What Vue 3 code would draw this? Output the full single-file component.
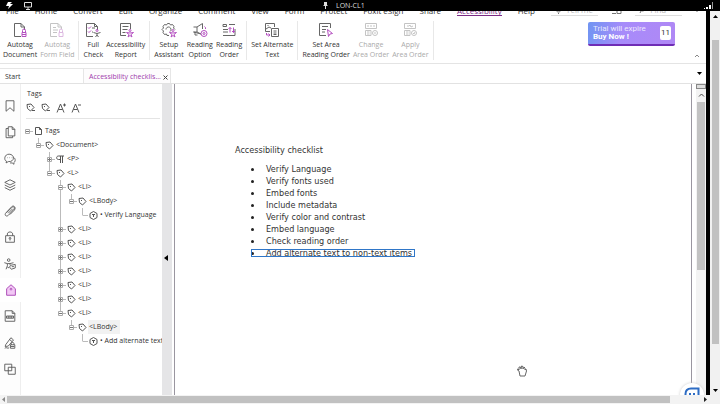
<script setup>
const menus = ['File', 'Home', 'Convert', 'Edit', 'Organize', 'Comment', 'View', 'Form', 'Protect', 'Foxit eSign', 'Share', 'Accessibility', 'Help']

const ribbon = [
  [
    { top: 'Autotag', bottom: 'Document', ink: 'M9 14.500H2.500V1.500H9L12.500 5V8M9 1.500V5H12.500', accent: 'M10.500 10.500V8.500a1.500 1.500 0 0 1 3 0V10.500M10 10.500H14V14.500H10ZM10 12.500H14' },
    { top: 'Autotag', bottom: 'Form Field', off: true, ink: 'M8 14.500H1.500V1.500H9L12.500 5V7M9 1.500V5H12.500M4 5.500H7M4 8H9M4 10.500H8', accent: 'M10.500 10.500V8.500a1.500 1.500 0 0 1 3 0V10.500M10 10.500H14V14.500H10Z' },
  ],
  [
    { top: 'Full', bottom: 'Check', ink: 'M8 14.500H1.500V1.500H9.500L12.500 4.500V8M9.500 1.500V4.500H12.500M7 6H10M7 10H8M8.500 10.500L12 11.500L15.500 10.500M12 11.500V13L10.500 15M12 13L13.500 15', accent: 'M3 5.500L4 6.500L6 4.500M3 9.500L4 10.500L6 8.500M11 8.500a1 1 0 1 0 2 0a1 1 0 1 0 -2 0' },
    { top: 'Accessibility', bottom: 'Report', ink: 'M8 13.500H2.500V1.500H12.500V7M4.500 4.500H10.500M4.500 7.500H9.500M4.500 10.500H7.500', accent: 'M8.500 10.500L12 11L15.500 10.500L13 12.500L14 15L12 13.500L10 15L11 12.500ZM11 8.500a1 1 0 1 0 2 0a1 1 0 1 0 -2 0' },
  ],
  [
    { top: 'Setup', bottom: 'Assistant', ink: 'M8 13.500H6L5.500 12L3.500 12.500L2 10.500L2.500 9L1 7.500L2.500 6L2 4.500L3.500 2.500L5.500 3L6.500 1.500H8.500L9.500 3L11.500 2.500L13 4.500L12.500 6L14 7.500M5 7.500a2.500 2.500 0 1 1 4 2', accent: 'M8.500 10.500L12 11L15.500 10.500L13 12.500L14 15L12 13.500L10 15L11 12.500ZM11 8.500a1 1 0 1 0 2 0a1 1 0 1 0 -2 0' },
    { top: 'Reading', bottom: 'Option', ink: 'M1.500 5H5L10.500 1.500V7M9 12L5 10H1.500ZM5 5V10M3 10V13H5.500', accent: 'M9 11.500a3 3 0 1 0 6 0a3 3 0 1 0 -6 0M11 11.500a1 1 0 1 0 2 0a1 1 0 1 0 -2 0M12.500 4.500Q14 5.500 13.500 7' },
    { top: 'Reading', bottom: 'Order', ink: 'M8 2.500H14M2 2.500H5.500V4.500H2ZM2 7.500H7M2 10H7M2 13.500H14V7', accent: 'M9 10.500V5.500L7.500 7M9 5.500L10.500 7M12.500 5.500V10.500L11 9M12.500 10.500L14 9' },
  ],
  [
    { top: 'Set Alternate', bottom: 'Text', ink: 'M6 9.500H1.500V1.500H10.500V5M2 7L5 5L7 6M3.500 3.500H4.500M7.500 6.500H14.500V14.500H7.500ZM9.500 9H12.500M9.500 11H12.500M9.500 12.500H12.500', accent: 'M2.500 11V13H5.500M4.500 11.500L6 13L4.500 14.500' },
  ],
  [
    { top: 'Set Area', bottom: 'Reading Order', ink: 'M8 13.500H1.500V1.500H12.500V6M4 4.500H10M4 7.500H8M4 10H7', accent: 'M9.500 7.500L14.500 11.500L12 12L10.500 14.500Z' },
    { top: 'Change', bottom: 'Area Order', off: true, ink: 'M2.500 1.500H13.500V6.500H2.500ZM5 3V5M8 3V5M11 3V5M2.500 8.500H8V13.500H2.500ZM4 10H6.500M4 12H6.500M9.500 11a2.500 2.500 0 1 0 5 0a2.500 2.500 0 1 0 -5 0M11 11H13', accent: '' },
    { top: 'Apply', bottom: 'Area Order', off: true, ink: 'M2.500 1.500H13.500V6.500H2.500ZM5 4H7L8 3L9 5L11 4M2.500 8.500H8V13.500H2.500ZM4 10H6.500M4 12H6.500M9.500 11a2.500 2.500 0 1 0 5 0a2.500 2.500 0 1 0 -5 0M11 11L12 12L13 10', accent: '' },
  ],
]

const rail = [
  { name: 'Bookmarks', d: 'M3.500 2H12.500V14L8 10L3.500 14Z' },
  { name: 'Pages', d: 'M6 2H10.500L13.500 5V12.500H6ZM10.500 2V5H13.500M6 4H3.500V14.500H11V12.500' },
  { name: 'Comments', d: 'M7 2.500C1 2.500 1 10 4 10.500L3.500 12.500L6 11C14 11.500 13.500 2.500 7 2.500ZM12 6C15 8 14 11 12.500 12V14L10.500 12.500H8M5 6.500H5.500M7.500 6.500H8M10 6.500H10.500' },
  { name: 'Layers', d: 'M8 2L14 5L8 8L2 5ZM2 8L8 11L14 8M2 11L8 14L14 11' },
  { name: 'Attachments', d: 'M4 10L10 4C12 2 14 4 12.500 6L6 13C3.500 15 1.500 12.500 3 10.500L9.500 3.500C12 0.500 15.500 4 13 7L8 12M6 10.500L11 5.500' },
  { name: 'Security', d: 'M3 6.500H13V14H3ZM5 6.500V4.500C5 1.500 11 1.500 11 4.500V6.500M8 10.500V12M7 9.500a1 1 0 1 0 2 0a1 1 0 1 0 -2 0' },
  { name: 'Accessibility', d: 'M5 3.500a1.500 1.500 0 1 0 3 0a1.500 1.500 0 1 0 -3 0M1.500 6.500L5 7.500V10L3.500 14M5 7.500H8L12 6.500M8 7.500V9M5 11.500L7 12.500M8.500 9.500L14 8.500V12.500L9.500 14L7.500 11.500ZM10 11H12.500' },
  { name: 'Tags', active: true, d: 'M3 6.500L8 2L13 6.500V14H3ZM7 7a1 1 0 1 0 2 0a1 1 0 1 0 -2 0' },
  { name: 'Fields', d: 'M2.500 2H10.500L13.500 5V14H2.500ZM10.500 2V5H13.500M4 8H12V10.500H4ZM6 8V10.500M8 8V10.500M10 8V10.500' },
  { name: 'Signatures', d: 'M3 10L9 2L12 4.500L6 11.500L2.500 12ZM7.500 4L10.500 6.500M2 14C4 12 5 15 7 13.500M9.500 10V8.500C9.500 7 12.500 7 12.500 8.500V10M8.500 10H13.500V14H8.500ZM9 12H13' },
  { name: 'Compare', d: 'M2 2.500H10V10H2ZM6 6H14V14H6Z' },
]

const li = { level: 3, label: '<LI>', icon: 'tag', box: 'plus', more: true }
const tree = [
  { level: 0, label: 'Tags', icon: 'page', box: 'minus' },
  { level: 1, label: '<Document>', icon: 'tag', box: 'minus' },
  { level: 2, label: '<P>', icon: 'para', box: 'plus', more: true },
  { level: 2, label: '<L>', icon: 'tag', box: 'minus' },
  { level: 3, label: '<LI>', icon: 'tag', box: 'minus', more: true },
  { level: 4, label: '<LBody>', icon: 'tag', box: 'minus', pass: true },
  { level: 5, label: '• Verify Language', icon: 'cube', pass: true },
  li, li, li, li, li, li,
  { level: 3, label: '<LI>', icon: 'tag', box: 'minus' },
  { level: 4, label: '<LBody>', icon: 'tag', box: 'minus', selected: true },
  { level: 5, label: '• Add alternate text', icon: 'cube' },
]
const glyphs = {
  page: 'M1.500 0.500H5.500L7.500 2.500V7.500H1.500ZM5.500 0.500V2.500H7.500',
  tag: 'M1 1.500L5 1L8 4.500L4.500 8L1.500 5.500ZM3 3.500H4',
  para: 'M8 1H2.500C0 1 0 4.500 2.500 4.500H4M4.500 1V8M6.500 1V8',
  cube: 'M4.500 0.500L8 2.500V6.500L4.500 8.500L1 6.500V2.500ZM3 3.500H6M4.500 4V6',
}

const items = ['Verify Language', 'Verify fonts used', 'Embed fonts', 'Include metadata', 'Verify color and contrast', 'Embed language', 'Check reading order', 'Add alternate text to non-text items']
</script>

<template>
  <div class="screen">
    <header class="session">
      <div class="session-left">
        <svg width="12" height="9" viewBox="0 0 12 9"><path d="M4 1H8L6 3H9L4 8L5 5H2Z" fill="#fff" /></svg>
        <svg width="10" height="9" viewBox="0 0 10 9"><path d="M1.500 1.500H8.500V6H1.500ZM5 6V8M3 8.500H7" fill="none" stroke="#ddd" /></svg>
      </div>
      <div class="session-name">
        <svg width="5" height="7" viewBox="0 0 5 7"><path d="M1 0H4V3L5 4H3V7H2V4H0L1 3Z" fill="#ddd" /></svg>
        <span>LON-CL1</span>
      </div>
      <svg class="signal" width="10" height="8" viewBox="0 0 10 8"><path d="M0 6H1V7H0ZM2 5H4V7H2ZM5 3H7V7H5Z" fill="#fff" /><path d="M8 0H9V7H8Z" fill="#999" /></svg>
    </header>

    <div class="viewport">
      <div class="remote">
        <div class="window">
          <nav class="menu">
            <button v-for="m in menus" :key="m" :class="{ current: m === 'Accessibility' }">{{ m }}</button>
            <div class="menu-tools">
              <label class="tell"><svg width="7" height="7" viewBox="0 0 7 7"><path d="M1 0C1 3 2 3 2.500 4H4.500C5 3 6 3 6 0M3 5.500H4" /></svg><input aria-label="Tell me" placeholder="Tell me" /></label>
              <svg class="people" width="10" height="7" viewBox="0 0 10 7"><path d="M0 4.500H4M5 4.500V1H9V4.500Z" /></svg>
              <label class="tell"><svg width="7" height="7" viewBox="0 0 7 7"><path d="M1 0C1 4 6 4 6 0M2 3L1 5" /></svg><input aria-label="Find" placeholder="Find" /></label>
              <svg width="2" height="7" viewBox="0 0 2 7"><path d="M1 1V3" /></svg>
            </div>
          </nav>

          <div class="ribbon">
            <div v-for="(group, g) in ribbon" :key="g" class="group">
              <button v-for="b in group" :key="b.top + b.bottom" class="command" :disabled="b.off">
                <svg width="16" height="16" viewBox="0 0 16 16"><path :d="b.ink" /><path class="accent" :d="b.accent" /></svg>
                <span>{{ b.top }}</span>
                <span>{{ b.bottom }}</span>
              </button>
            </div>
            <div class="ribbon-end">
              <a class="trial" href="#">
                <span class="trial-text"><span>Trial will expire</span><b>Buy Now !</b></span>
                <span class="days">11</span>
              </a>
              <button class="fold" aria-label="Collapse ribbon"><svg width="6" height="4" viewBox="0 0 6 4"><path d="M1 3L3 1L5 3" /></svg></button>
            </div>
          </div>

          <div class="tabs">
            <button class="tab">Start</button>
            <div class="tab open">
              <button class="tab-name">Accessibility checklis...</button>
              <button class="close" aria-label="Close tab"><svg width="5" height="5" viewBox="0 0 5 5"><path d="M0.500 0.500L4.500 4.500M4.500 0.500L0.500 4.500" /></svg></button>
            </div>
            <button class="tab-list" aria-label="List tabs"><svg width="5" height="3" viewBox="0 0 5 3"><path d="M0 0H5L2.500 3Z" /></svg></button>
          </div>

          <main class="work">
            <nav class="rail">
              <button v-for="r in rail" :key="r.name" :aria-label="r.name" :class="{ active: r.active }">
                <svg width="14" height="14" viewBox="0 0 16 16"><path :d="r.d" /></svg>
              </button>
            </nav>

            <section class="panel">
              <h2>Tags</h2>
              <div class="tools">
                <button v-for="n in 2" :key="n" :aria-label="n === 1 ? 'Previous tag' : 'Next tag'">
                  <svg width="11" height="10" viewBox="0 0 11 10"><path d="M1 1.500L5 1L8 4.500L4.500 8L1.500 5.500ZM3 3.500H4" /><path d="M6 7.500H9" /></svg>
                </button>
                <button aria-label="Larger text"><svg width="11" height="10" viewBox="0 0 11 10"><path d="M1 9.500L4.500 1L8 9.500M2.500 6.500H6.500M7 2H10M8.500 0.500V3.500" /></svg></button>
                <button aria-label="Smaller text"><svg width="11" height="10" viewBox="0 0 11 10"><path d="M1 9.500L4.500 1L8 9.500M2.500 6.500H6.500M7 2H10" /></svg></button>
              </div>
              <ul class="tree">
                <li v-for="(t, i) in tree" :key="i">
                  <svg :width="22 + t.level * 11" height="14" :viewBox="`${-t.level * 11} 0 ${22 + t.level * 11} 14`">
                    <path class="guide" :d="`M5.500 ${t.level ? 0 : 7}V${t.more ? 14 : 7}M5.500 7.500H11`" />
                    <path v-if="t.pass" class="guide" :d="`M${5.5 - (t.level - 3) * 11} 0V14`" />
                    <path v-if="t.box" class="box" d="M3.500 5.500H7.500V9.500H3.500Z" />
                    <path v-if="t.box" class="sign" :d="t.box === 'plus' ? 'M4 7.500H7M5.500 6V9' : 'M4 7.500H7'" />
                    <path class="glyph" :d="glyphs[t.icon]" transform="translate(12 3)" />
                  </svg>
                  <button :class="{ selected: t.selected }">{{ t.label }}</button>
                </li>
              </ul>
            </section>

            <button class="splitter" aria-label="Hide panel"><svg width="4" height="6" viewBox="0 0 4 6"><path d="M4 0V6L0 3Z" /></svg></button>

            <article class="page">
              <h1>Accessibility checklist</h1>
              <ul>
                <li v-for="(t, i) in items" :key="t" :class="{ marked: i === items.length - 1 }"><span>{{ t }}</span></li>
              </ul>
              <svg class="hand" width="12" height="12" viewBox="0 0 12 12"><path d="M3 6L1 4.500L2 4L3 5V2L4.500 2L5 4L5.500 1L7 1.500V4L8 2L9 3V5L10 4L10.500 6L9 11H4Z" fill="#fff" stroke="#666" /></svg>
            </article>

            <div class="scroller">
              <i class="split"></i>
              <svg width="7" height="4" viewBox="0 0 7 4"><path d="M1 3.500L3.500 1L6 3.500" fill="none" stroke="#444" /></svg>
              <i class="thumb"></i>
            </div>
            <button class="assistant" aria-label="Assistant"><svg width="16" height="14" viewBox="0 0 16 14"><path d="M1.500 13V7C1.500 3 4 1.500 7 1.500H14.500V13M6 6V10M10 6V10" /></svg></button>
          </main>
        </div>
        <div class="bottom-scroll">
          <svg width="3" height="5" viewBox="0 0 3 5"><path d="M3 0V5L0 2.500Z" fill="#888" /></svg>
          <i></i>
          <svg width="3" height="5" viewBox="0 0 3 5"><path d="M0 0V5L3 2.500Z" fill="#222" /></svg>
        </div>
      </div>
      <div class="outer-scroll">
        <svg width="5" height="3" viewBox="0 0 5 3"><path d="M0 3H5L2.500 0Z" /></svg>
        <i></i>
        <svg width="5" height="3" viewBox="0 0 5 3"><path d="M0 0H5L2.500 3Z" /></svg>
      </div>
    </div>
  </div>
</template>

<style>
body { margin: 0; overflow: hidden; }
</style>

<style scoped>
* { box-sizing: border-box; }
button { font: inherit; color: inherit; background: none; border: 0; padding: 0; margin: 0; white-space: nowrap; }
svg { display: block; flex: none; }
ul { list-style: none; margin: 0; padding: 0; }
.screen { display: flex; flex-direction: column; height: 100vh; background: #fff; color: #333; font: 7px/10px "Open Sans", "Noto Sans", sans-serif; }
.session { display: grid; grid-template-columns: 10fr auto 11fr; align-items: center; height: 11px; flex: none; background: #000; color: #ddd; }
.session-left { display: flex; gap: 7px; padding-left: 4px; }
.session-name { display: flex; align-items: center; gap: 8px; }
.signal { justify-self: end; margin-right: 6px; }
.viewport { display: flex; flex: 1; min-height: 0; }
.remote { display: flex; flex-direction: column; flex: 1; min-width: 0; }
.window { display: flex; flex-direction: column; flex: 1; min-height: 0; border-right: 4px solid #000; }

.menu { display: flex; align-items: flex-end; gap: 16px; height: 6px; flex: none; padding: 0 0 1px 6px; overflow: hidden; font-size: 8px; line-height: 10px; }
.menu .current { line-height: 8px; color: #7b2a85; border-bottom: 1px solid #7b2a85; }
.menu-tools { display: flex; flex: 1; align-items: flex-end; justify-content: space-between; padding-right: 8px; }
.menu-tools path { fill: none; stroke: #777; }
.tell { display: flex; align-items: flex-end; gap: 4px; width: 47px; padding-left: 4px; border-bottom: 1px solid #ddd; }
.tell input { width: 100%; min-width: 0; height: 10px; padding: 0; border: 0; background: none; font: inherit; }
.tell input::placeholder { color: #bbb; opacity: 1; }

.ribbon { display: flex; flex: none; padding: 4px 0 3px 3px; border-bottom: 1px solid #e4e4e4; }
.group { display: flex; gap: 3px; padding-right: 4px; margin-right: 4px; border-right: 1px solid #e8e8e8; }
.command { display: flex; flex-direction: column; align-items: center; padding-top: 1px; }
.command svg { margin-bottom: 2px; }
.command path { fill: none; stroke: #666; }
.command .accent { stroke: #b44fc0; }
.command:disabled { color: #aaa; }
.command:disabled path { stroke: #c4c4c4; }
.command:disabled .accent { stroke: #dcb8e0; }
.ribbon-end { display: flex; flex: 1; justify-content: flex-end; gap: 19px; padding-right: 6px; }
.trial { display: flex; align-items: center; align-self: flex-start; justify-content: space-between; width: 87px; height: 24px; margin-top: 1px; padding: 0 4px 0 5px; border-bottom: 2px solid #6f2db5; border-radius: 2px; background: linear-gradient(100deg, #7095f2, #a78bfa 40%, #b088f5); color: #fff; text-decoration: none; }
.trial-text { display: flex; flex-direction: column; font: 8px/8px Roboto, sans-serif; white-space: nowrap; }
.trial-text span { opacity: 0.8; }
.days { padding: 0 1px; border-radius: 2px; background: #fff; color: #333; font: 8px/14px Roboto, sans-serif; }
.fold { align-self: flex-end; padding-bottom: 2px; }
.fold path { fill: none; stroke: #888; }

.tabs { display: flex; flex: none; height: 20px; padding-top: 4px; border-bottom: 1px solid #e2e2e2; }
.tab { display: flex; align-items: center; width: 84px; padding: 2px 0 0 5px; border: 0 solid #e6e6e6; border-width: 1px 1px 0 0; text-align: left; }
.tab.open { gap: 2px; width: auto; color: #a03aac; background: #fdfcfd; }
.close { padding-right: 2px; }
.close path { fill: none; stroke: #444; }
.tab-list { margin-left: auto; padding: 0 4px 4px; }

.work { position: relative; display: flex; flex: 1; min-height: 0; overflow: hidden; }
.rail { display: flex; flex-direction: column; justify-content: space-between; width: 21px; flex: none; padding: 14px 0 18px; border-right: 1px solid #eee; background: #fdfdfd; }
.rail button { display: flex; align-items: center; justify-content: center; height: 16px; }
.rail path { fill: none; stroke: #555; }
.rail .active { margin: -4px -1px -4px 0; height: 24px; background: #fff; }
.rail .active path { fill: #f2c8f5; stroke: #a33bb0; }

.panel { width: 141px; flex: none; padding: 5px 0 0 1px; overflow: hidden; }
h2 { margin: 0 0 4px 5px; font-size: 7px; font-weight: 400; line-height: 10px; }
.tools { display: flex; gap: 4px; margin: 0 2px 5px 4px; padding-bottom: 5px; border-bottom: 1px solid #e4e4e4; }
.tools path { fill: none; stroke: #555; }
.tree li { display: flex; align-items: center; height: 14px; }
.tree button { padding: 1px; line-height: 12px; }
.tree .selected { padding-right: 3px; background: #f2f2f2; }
.tree path { fill: none; }
.tree .guide { stroke: #bbb; }
.tree .box { fill: #fff; stroke: #aaa; }
.tree .sign { stroke: #777; }
.tree .glyph { stroke: #555; }

.splitter { display: flex; align-items: center; width: 10px; flex: none; margin-right: 2px; padding: 37px 0 0 2px; background: #e5e5e7; }
.page { position: relative; flex: 1; min-width: 0; padding: 60px 0 0 60px; border: 0 solid #9a96a0; border-width: 0 1px 0 1px; font: 9px/12px "DejaVu Sans Condensed", "DejaVu Sans", sans-serif; }
h1 { margin: 0 0 7px; font-size: 9px; font-weight: 400; line-height: 12px; }
.page li { display: flex; align-items: center; width: fit-content; height: 12px; margin-left: 16px; padding-right: 3px; white-space: nowrap; }
.page li::before { content: ""; width: 3px; height: 3px; margin-right: 12px; border-radius: 50%; background: #222; }
.page .marked { height: 8px; margin-top: 2px; outline: 1px solid #2f76c8; outline-offset: -1px; overflow: hidden; }
.hand { position: absolute; right: 163px; bottom: 18px; }

.scroller { display: flex; flex-direction: column; align-items: center; width: 10px; flex: none; margin-left: 4px; background: #f3f3f3; }
.split { width: 10px; height: 5px; margin-bottom: 4px; border: 1px solid #888; background: #ddd; }
.scroller .thumb { width: 8px; height: 54%; margin-top: 5px; background: #c2c2c2; }
.assistant { position: absolute; right: 2px; bottom: -12px; display: flex; justify-content: center; width: 24px; height: 24px; padding-top: 4px; border-radius: 50%; background: #fff; box-shadow: 0 0 3px #ccc; }
.assistant path { fill: none; stroke: #2d6cc4; stroke-width: 2; }

.bottom-scroll { display: flex; flex: none; align-items: center; gap: 2px; height: 9px; padding: 0 3px 0 2px; background: #f3f3f3; }
.bottom-scroll i { width: 94%; height: 7px; margin-right: auto; background: #c1c1c1; }
.outer-scroll { display: flex; flex-direction: column; align-items: center; width: 10px; flex: none; padding: 4px 0 12px; background: #f1f1f1; }
.outer-scroll i { width: 7px; height: 304px; margin: 22px 0 auto; background: #c1c1c1; }
</style>
